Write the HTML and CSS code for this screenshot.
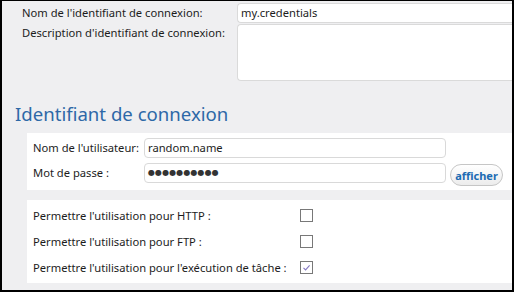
FILE: index.html
```html
<!DOCTYPE html>
<html lang="fr">
<head>
<meta charset="utf-8">
<title>Identifiant de connexion</title>
<link rel="stylesheet" href="styles.css">
</head>
<body>
<div class="frame">
  <div class="top">
    <div class="lbl l1">Nom de l'identifiant de connexion:</div>
    <div class="field f1">my.credentials</div>
    <div class="lbl l2">Description d'identifiant de connexion:</div>
    <div class="field area"></div>
  </div>
  <h2 class="title">Identifiant de connexion</h2>
  <div class="panel creds">
    <div class="row">
      <span class="plbl">Nom de l'utilisateur:</span>
      <div class="input">random.name</div>
    </div>
    <div class="row">
      <span class="plbl">Mot de passe :</span>
      <div class="input pw">●●●●●●●●●●</div>
      <button class="show">afficher</button>
    </div>
  </div>
  <div class="panel perms">
    <div class="prow"><span class="clbl">Permettre l'utilisation pour HTTP :</span><span class="cb"></span></div>
    <div class="prow"><span class="clbl">Permettre l'utilisation pour FTP :</span><span class="cb"></span></div>
    <div class="prow"><span class="clbl">Permettre l'utilisation pour l'exécution de tâche :</span><span class="cb"><svg width="11" height="11" viewBox="0 0 11 11"><polyline points="2.5,5.8 4.6,7.9 8.6,3.4" fill="none" stroke="#8577c2" stroke-width="1.1"/></svg></span></div>
  </div>
</div>
</body>
</html>
```
FILE: styles.css
```css
body {
  margin: 0;
  background: #fff;
}
.frame {
  width: 510px;
  height: 289px;
  border: 2px solid #000;
  border-top-width: 1px;
  background: #efeff1;
  overflow: hidden;
  font-family: "Noto Sans", "Open Sans", sans-serif;
  font-size: 11.2px;
  color: #1c1c1c;
}
.top {
  display: grid;
  grid-template-columns: 215px 1fr;
  row-gap: 1px;
  padding: 2px 0 0 20px;
}
.lbl {
  white-space: nowrap;
}
.l1 {
  line-height: 20px;
}
.l2 {
  line-height: 18px;
  align-self: start;
}
.field {
  background: #fff;
  border: 1px solid #dadada;
  border-right: none;
  border-radius: 4px 0 0 4px;
  box-sizing: border-box;
}
.f1 {
  height: 20px;
  line-height: 18px;
  padding-left: 3px;
}
.area {
  height: 57px;
}
.title {
  margin: 21px 0 7px;
  padding-left: 13px;
  font-size: 18.6px;
  line-height: 24px;
  font-weight: normal;
  color: #2d68a7;
}
.panel {
  margin-left: 25px;
  background: #fff;
  box-sizing: border-box;
}
.creds {
  height: 57px;
  padding: 5px 0 0 6px;
  display: flex;
  flex-direction: column;
  gap: 5px;
}
.row {
  display: flex;
  align-items: flex-start;
}
.plbl {
  width: 111px;
  line-height: 20px;
  white-space: nowrap;
}
.input {
  width: 302px;
  height: 20px;
  box-sizing: border-box;
  border: 1px solid #d9d9d9;
  border-radius: 4px;
  padding-left: 3px;
  line-height: 18px;
}
.pw {
  font-family: "DejaVu Sans", sans-serif;
  font-size: 8px;
  letter-spacing: 0.1px;
  color: #333;
}
.show {
  margin: 1px 0 0 4px;
  width: 53px;
  height: 22px;
  padding: 0;
  border: 1px solid #c6c6c6;
  border-radius: 11px;
  background: linear-gradient(#ffffff, #ececec);
  font-family: "Noto Sans", sans-serif;
  font-size: 11px;
  font-weight: bold;
  color: #1b6bb3;
}
.perms {
  margin-top: 10px;
  padding: 2px 0 3px 6px;
}
.prow {
  display: flex;
  align-items: center;
  height: 26px;
}
.clbl {
  width: 267px;
  white-space: nowrap;
}
.cb {
  width: 13px;
  height: 13px;
  box-sizing: border-box;
  border: 1px solid #787878;
  background: #fff;
  display: flex;
}
```
